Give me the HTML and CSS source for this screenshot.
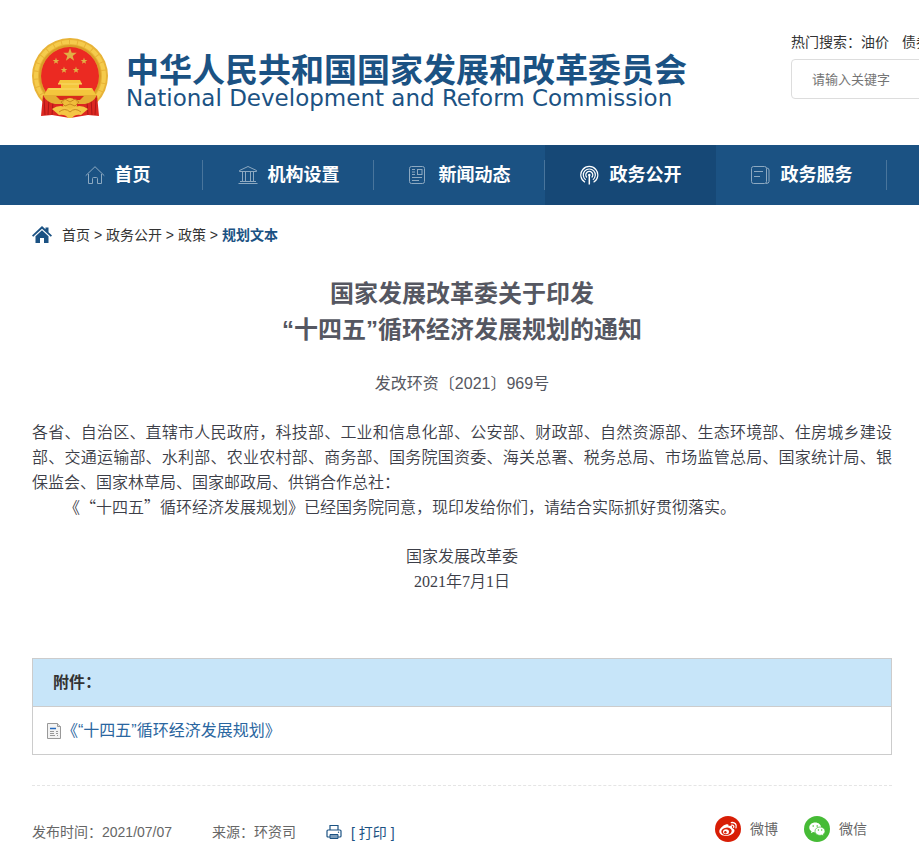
FILE: index.html
```html
<!DOCTYPE html>
<html lang="zh-CN">
<head>
  <meta charset="utf-8">
  <title>国家发展改革委</title>
  <link rel="stylesheet" href="styles.css">
</head>
<body>
  <header class="header">
    <a class="logo" href="#">
      <svg class="emblem" viewBox="0 0 76 80" aria-hidden="true">
        <defs>
          <path id="star" d="M0-7L1.7-2.2L6.7-2.2L2.7.9L4.1 5.7L0 2.8L-4.1 5.7L-2.7.9L-6.7-2.2L-1.7-2.2Z"/>
        </defs>
        <circle cx="38" cy="38" r="38" fill="#e8b337"/>
        <circle cx="38" cy="38" r="34" fill="none" stroke="#f5cb4c" stroke-width="4" stroke-dasharray="7 1"/>
        <circle cx="38" cy="38" r="30" fill="none" stroke="#d99d27" stroke-width="2"/>
        <circle cx="38" cy="38" r="29" fill="#eb2a22"/>
        <g fill="#e0b045">
          <use href="#star" x="38" y="17"/>
          <use href="#star" transform="translate(24 23) scale(.5)"/>
          <use href="#star" transform="translate(52 23) scale(.5)"/>
          <use href="#star" transform="translate(32 32) scale(.5)"/>
          <use href="#star" transform="translate(44 32) scale(.5)"/>
        </g>
        <path d="M28 42h20l2 4h-3v4h13l4 7H12l4-7h13v-4h-3z" fill="#f4c63d"/>
        <path d="M26 46h24M17 51h42" stroke="#fadb69"/>
        <path d="M11 57q27 4 54 0l2 21-11-1-18 3-18-3-11 1z" fill="#dc2720"/>
        <path d="M12 60l1 17M17 60l-1 17M21 64l-1 13M64 60l-1 17M59 60l1 17M55 64l1 13" fill="none" stroke="#ad1717"/>
        <path d="M11 57h54q-4 8-12 9H23q-8-1-12-9z" fill="#e5ae32"/>
        <path d="M24 58h28l-4 4H28z" fill="#d92a1c"/>
        <circle cx="38" cy="67" r="7" fill="#f0bd3a"/>
        <path d="M20 71q8-6 18 0 10-6 18 0l-7 6q-6-1-9 3h-4q-3-4-9-3z" fill="#f4c645"/>
        <path d="M29 64l4-3 5 3 5-3 4 3-4 4-5-2-5 2zM27 74q6-5 11 0 5-5 11 0" fill="none" stroke="#c98a20"/>
      </svg>
      <span class="logo-text">
        <span class="logo-cn">中华人民共和国国家发展和改革委员会</span>
        <span class="logo-en" lang="en">National Development and Reform Commission</span>
      </span>
    </a>
    <form class="search">
      <div class="hot">热门搜索：<a href="#">油价</a><a href="#">债券</a></div>
      <input class="search-input" type="text" placeholder="请输入关键字" aria-label="请输入关键字">
    </form>
  </header>

  <nav class="nav">
    <a class="nav-item" href="#">
      <svg class="nav-icon" viewBox="0 0 20 20" aria-hidden="true"><path d="M.7 10.7L10 1.7l9.3 9M3.5 9v9.5h4v-5q0-1 1-1h3q1 0 1 1v5h4V9"/></svg>
      首页
    </a>
    <a class="nav-item" href="#">
      <svg class="nav-icon" viewBox="0 0 20 20" aria-hidden="true"><path d="M1.5 5.5L10 1.5l8.5 4v1h-17zM4.5 7v10M7.500 7v10M12.500 7v10M15.500 7v10M2 16.5h16M.5 18.5h19"/></svg>
      机构设置
    </a>
    <a class="nav-item" href="#">
      <svg class="nav-icon" viewBox="0 0 20 20" aria-hidden="true"><rect x=".5" y="1.5" width="15" height="17" rx="2"/><rect x="8.500" y="4.500" width="4.500" height="5"/><path d="M3 4.500h3M3 7h3M3 9.500h3M3 12.500h10M3 15.500h7"/></svg>
      新闻动态
    </a>
    <a class="nav-item active" href="#">
      <svg class="nav-icon" viewBox="0 0 20 20" aria-hidden="true"><path d="M5 17.300A8.500 8.500 0 1 1 13.600 17.300M5.700 14.800A6 6 0 1 1 12.900 14.800M6.900 12.500A3.500 3.500 0 1 1 11.700 12.500" stroke-width="1.200"/><path d="M9.300 10v9.500" stroke-width="1.500"/><circle cx="9.300" cy="10" r="1.200" fill="#fff" stroke="none"/></svg>
      政务公开
    </a>
    <a class="nav-item" href="#">
      <svg class="nav-icon" viewBox="0 0 20 20" aria-hidden="true"><rect x=".5" y="1.500" width="15" height="17" rx="2"/><path d="M3 6.500h9M3 11.500h6M15.500 3q2.500 0 2.500 2v11.500q0 2-3 2"/></svg>
      政务服务
    </a>
  </nav>

  <main class="main">
    <div class="crumb">
      <svg class="crumb-icon" viewBox="0 0 20 18" aria-hidden="true"><path d="M10 0l3.500 3.300V1.500h3v4.700L20 9.600l-1.200 1.200L10 2.700l-8.800 8.100L0 9.600zM10 4.300l6.500 6V17H12v-5H8v5H3.500v-6.700z"/></svg>
      <div><a href="#">首页</a> &gt; <a href="#">政务公开</a> &gt; <a href="#">政策</a> &gt; <a class="current" href="#">规划文本</a></div>
    </div>

    <article>
      <h1 class="title">国家发展改革委关于印发<br>“十四五”循环经济发展规划的通知</h1>
      <p class="doc-no">发改环资〔2021〕969号</p>
      <div class="content">
        <p>各省、自治区、直辖市人民政府，科技部、工业和信息化部、公安部、财政部、自然资源部、生态环境部、住房城乡建设部、交通运输部、水利部、农业农村部、商务部、国务院国资委、海关总署、税务总局、市场监管总局、国家统计局、银保监会、国家林草局、国家邮政局、供销合作总社：</p>
        <p class="indent">《“十四五”循环经济发展规划》已经国务院同意，现印发给你们，请结合实际抓好贯彻落实。</p>
      </div>
      <div class="sign">
        <p>国家发展改革委</p>
        <p>2021年7月1日</p>
      </div>
    </article>

    <section class="attach">
      <h2 class="attach-title">附件：</h2>
      <div class="attach-row">
        <svg class="file-icon" viewBox="0 0 16 16" aria-hidden="true"><path d="M1.500.5h10l3 3v12h-13z" fill="#f3f3f3" stroke="#999"/><path d="M11.500.5v3h3" fill="#ddd" stroke="#999"/><path d="M4 5.500h6" stroke="#2469bd" stroke-width="1.500"/><path d="M4 8.500h4M4 10.500h4M4 12.500h5M10 8.500h2M10 10.500h2M11 12.500h1" stroke="#999"/></svg>
        <a href="#">《“十四五”循环经济发展规划》</a>
      </div>
    </section>

    <footer class="meta">
      <span class="time">发布时间：2021/07/07</span>
      <span class="source">来源：环资司</span>
      <button class="print" type="button">
        <svg class="print-icon" viewBox="0 0 16 16" aria-hidden="true"><path d="M4 6V1.500h8V6M4 13H2q-1 0-1-1V7q0-1 1-1h12q1 0 1 1v5q0 1-1 1h-2" fill="none" stroke="#1b5283" stroke-width="1.200"/><path d="M4 10.500h8v4H4z" fill="#7d9dba" stroke="#1b5283"/><circle cx="12.500" cy="8.300" r=".7" fill="#1b5283"/></svg>
        [ 打印 ]
      </button>
      <div class="share">
        <a href="#">
          <svg class="share-icon" viewBox="0 0 26 26" aria-hidden="true"><circle cx="13" cy="13" r="13" fill="#d81e06"/><path d="M11.500 8.300c1.400-.5 2.600.1 2 2 2.300-1 4.300-.4 3.600 1.600 4.300 1.500 2.300 5.500-1.500 7-5.200 2-11.300.4-11.300-3.500 0-2.700 3.600-6.200 7.200-7.100z" fill="#fff"/><ellipse cx="11.500" cy="15.300" rx="5.200" ry="3.700" transform="rotate(-8 11.500 15.300)" fill="#d81e06"/><ellipse cx="11" cy="15.700" rx="3" ry="2.500" fill="#fff"/><circle cx="10.400" cy="16.200" r="1.200" fill="#d81e06"/><path d="M16.300 6.600c3.500-.6 5.900 2 4.700 5.300M16.600 9.100c1.600-.2 2.600.8 2.100 2.300" fill="none" stroke="#fff" stroke-width="1.300" stroke-linecap="round"/></svg>
          微博
        </a>
        <a href="#">
          <svg class="share-icon" viewBox="0 0 26 26" aria-hidden="true"><circle cx="13" cy="13" r="13" fill="#46bb36"/><path d="M11.200 6.500c-3.300 0-5.900 2.200-5.900 5 0 1.600.8 2.900 2.200 3.800l-.6 2 2.200-1.200 2.100.3c3.300 0 5.900-2.200 5.900-4.900s-2.600-5-5.900-5z" fill="#fff"/><path d="M16 11c-2.900 0-5 1.900-5 4.200s2.200 4.200 5 4.200l1.700-.3 1.900 1-.5-1.700c1.200-.8 1.900-1.900 1.900-3.200 0-2.300-2.200-4.200-5-4.200z" fill="#fff" stroke="#46bb36" stroke-width=".7"/><g fill="#46bb36"><circle cx="9.200" cy="10" r=".8"/><circle cx="13.200" cy="10" r=".8"/><circle cx="14.400" cy="14" r=".7"/><circle cx="17.700" cy="14" r=".7"/></g></svg>
          微信
        </a>
      </div>
    </footer>
  </main>
</body>
</html>
```

FILE: styles.css
```css
* {
  box-sizing: border-box;
  margin: 0;
  padding: 0;
}

body {
  background-color: #ffffff;
  color: #333333;
  font-family: "Liberation Sans", "Noto Sans CJK SC", sans-serif;
  font-size: 14px;
  line-height: 20px;
  overflow-x: hidden;
}

a {
  color: inherit;
  text-decoration: none;
}

/* header */
.header {
  display: flex;
  align-items: flex-start;
  gap: 104px;
  height: 145px;
  padding: 32px 0 0 32px;
  overflow: hidden;
}

.logo {
  display: flex;
  flex: none;
  gap: 18px;
  padding-top: 6px;
  color: #1b5283;
}

.emblem {
  width: 76px;
  height: 80px;
}

.logo-text {
  display: flex;
  flex-direction: column;
  padding-top: 12px;
  white-space: nowrap;
}

.logo-cn {
  font-family: "Noto Sans CJK SC", sans-serif;
  font-size: 33px;
  font-weight: bold;
  line-height: 36px;
}

.logo-en {
  font-family: "DejaVu Sans", sans-serif;
  font-size: 23px;
  line-height: 24px;
}

.search {
  flex: none;
}

.hot {
  white-space: nowrap;
}

.hot a {
  margin-right: 13px;
}

.search-input {
  display: block;
  width: 300px;
  height: 40px;
  margin-top: 7px;
  padding: 0 20px;
  border: 1px solid #dddddd;
  border-radius: 4px;
  font-family: inherit;
  font-size: 13px;
}

.search-input::placeholder {
  color: #757575;
}

/* nav */
.nav {
  display: flex;
  height: 60px;
  padding-left: 32px;
  background-color: #1b5283;
  overflow: hidden;
}

.nav-item {
  display: flex;
  flex: none;
  align-items: center;
  justify-content: center;
  gap: 10px;
  width: 171px;
  color: #ffffff;
  font-size: 18px;
  font-weight: bold;
  background-image: linear-gradient(#49759c, #49759c);
  background-size: 1px 30px;
  background-position: right center;
  background-repeat: no-repeat;
}

.nav-item.active {
  background-color: #164876;
  background-image: none;
}

.nav-icon {
  width: 20px;
  height: 20px;
  fill: none;
  stroke: #8da9c1;
}

.active .nav-icon {
  stroke: #ffffff;
}

/* main */
.main {
  padding: 20px 27px 14px 32px;
}

.crumb {
  display: flex;
  align-items: center;
  gap: 10px;
}

.crumb-icon {
  width: 20px;
  height: 18px;
  fill: #1b5283;
}

.current {
  color: #1b5283;
  font-weight: bold;
}

.title {
  margin-top: 31px;
  color: #555761;
  font-size: 24px;
  line-height: 36px;
  text-align: center;
}

.doc-no {
  margin: 23px 0;
  color: #555761;
  font-size: 16px;
  line-height: 25px;
  text-align: center;
}

.content,
.sign {
  color: #3c3e48;
  font-size: 16px;
  font-weight: 350;
  line-height: 25px;
}

.content {
  font-family: "Noto Sans CJK SC", sans-serif;
  text-align: justify;
  text-spacing-trim: space-all;
}

.indent {
  text-indent: 2em;
}

.sign {
  margin-top: 25px;
  font-family: "Liberation Serif", "Noto Sans CJK SC", serif;
  text-align: center;
}

/* attachment */
.attach {
  margin-top: 64px;
  border: 1px solid #cccccc;
}

.attach-title {
  padding: 0 20px;
  background-color: #c7e5f9;
  border-bottom: 1px solid #cccccc;
  font-size: 16px;
  line-height: 47px;
}

.attach-row {
  display: flex;
  align-items: center;
  padding-left: 13px;
  color: #2a66a0;
  font-size: 16px;
  line-height: 47px;
}

.file-icon {
  width: 16px;
  height: 16px;
}

/* meta */
.meta {
  display: flex;
  align-items: flex-end;
  margin-top: 30px;
  padding-top: 30px;
  border-top: 1px dashed #e5e5e5;
  color: #666666;
}

.source {
  margin: 0 30px 0 40px;
}

.print {
  display: flex;
  align-items: center;
  gap: 9px;
  border: none;
  background: none;
  color: #1b5283;
  font-family: inherit;
  font-size: 14px;
  cursor: pointer;
}

.print-icon {
  width: 16px;
  height: 16px;
}

.share {
  display: flex;
  gap: 26px;
  margin-left: auto;
  padding-right: 25px;
}

.share a {
  display: flex;
  align-items: center;
  gap: 9px;
}

.share-icon {
  width: 26px;
  height: 26px;
}
```
